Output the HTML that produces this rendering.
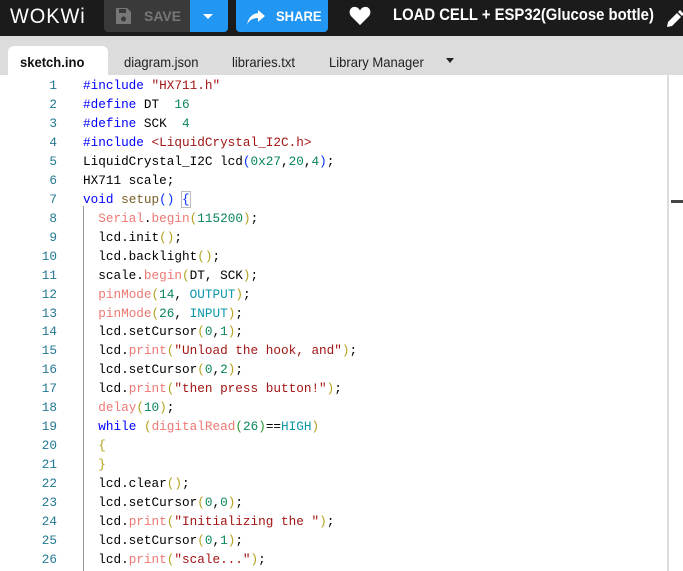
<!DOCTYPE html>
<html><head><meta charset="utf-8"><style>
*{margin:0;padding:0;box-sizing:border-box}
body{width:683px;height:571px;overflow:hidden;background:#fff;font-family:"Liberation Sans",sans-serif;position:relative}
.hdr{position:absolute;left:0;top:0;width:683px;height:36px;background:#1b1b1b;overflow:hidden}
.tabs{position:absolute;left:0;top:36px;width:683px;height:39px;background:#dcdcdc}
.tab{position:absolute;top:12px;height:29px;font-size:14px;line-height:29px;color:#222;transform:scaleX(0.93);transform-origin:left}
.ed{position:absolute;left:0;top:75px;width:669px;height:496px;background:#fff;border-right:2px solid #ddd}
.ln{position:absolute;left:0;width:57px;text-align:right;color:#237893;font-family:"Liberation Mono",monospace;font-size:12.7px}
.cd{position:absolute;left:83px;white-space:pre;font-family:"Liberation Mono",monospace;font-size:12.7px;color:#000}
.k{color:#0000ff}.s{color:#a31515}.n{color:#098658}.f{color:#795e26}.c{color:#ee7872}.t{color:#0a98a8}.b1{color:#0431fa}.b2{color:#b3a31e}.b3{color:#319331}
.guide{position:absolute;left:83px;top:206px;width:1px;height:365px;background:#999}
</style></head><body>
<div class="hdr">
<div style="position:absolute;left:10px;top:5px;color:#fff;font-family:'Liberation Sans',sans-serif;font-size:21px;letter-spacing:1px;transform:scaleX(0.95);transform-origin:left">WOKWi</div>
<div style="position:absolute;left:104px;top:0;width:87px;height:32px;background:#3a3a3a;border-radius:0 0 0 4px"></div>
<svg style="position:absolute;left:114px;top:7px" width="18" height="18" viewBox="0 0 18 18"><path d="M2 1h11l4 4v12H2z" fill="#777"/><rect x="5" y="2" width="7" height="4" fill="#3a3a3a"/><circle cx="9.5" cy="12" r="2.5" fill="#3a3a3a"/></svg>
<div style="position:absolute;left:144px;top:8px;color:#777;font-weight:bold;font-size:14px">SAVE</div>
<div style="position:absolute;left:190px;top:0;width:38px;height:32px;background:#2196f3;border-radius:0 0 4px 0"></div>
<div style="position:absolute;left:203px;top:14px;width:0;height:0;border-left:5px solid transparent;border-right:5px solid transparent;border-top:5px solid #fff"></div>
<div style="position:absolute;left:236px;top:0;width:92px;height:32px;background:#2196f3;border-radius:0 0 4px 4px"></div>
<svg style="position:absolute;left:246px;top:8px" width="20" height="18" viewBox="0 0 20 18"><path d="M12 2l7 6-7 6v-4C7 10 3 12 1 17c1-6 4-11 11-12z" fill="#fff"/></svg>
<div style="position:absolute;left:276px;top:8px;color:#fff;font-weight:bold;font-size:14px;transform:scaleX(0.93);transform-origin:left">SHARE</div>
<svg style="position:absolute;left:349px;top:6px" width="22" height="20" viewBox="0 0 24 22"><path d="M12 21L2 11C-1 7 1 1 6 1c3 0 5 2 6 4 1-2 3-4 6-4 5 0 7 6 4 10z" fill="#fff"/></svg>
<div style="position:absolute;left:393px;top:6px;color:#fff;font-weight:bold;font-size:16.5px;white-space:nowrap;transform:scaleX(0.9);transform-origin:left">LOAD CELL + ESP32(Glucose bottle)</div>
<svg style="position:absolute;left:664px;top:7px" width="20" height="22" viewBox="0 0 20 22"><path d="M3 20l1-5L13 6l4 4L8 19z M14 5l2-2 4 4-2 2z" fill="#fff"/></svg>
</div>
<div class="tabs">
<div style="position:absolute;left:8px;top:10px;width:100px;height:29px;background:#fff;border-radius:6px 6px 0 0"></div>
<div class="tab" style="left:20px;font-weight:bold;color:#111">sketch.ino</div>
<div class="tab" style="left:124px">diagram.json</div>
<div class="tab" style="left:232px">libraries.txt</div>
<div class="tab" style="left:329px">Library Manager</div>
<div style="position:absolute;left:446px;top:22px;border-left:4.5px solid transparent;border-right:4.5px solid transparent;border-top:5px solid #222"></div>
</div>
<div class="ed"></div>
<div style="position:absolute;left:671px;top:200px;width:12px;height:3px;background:#444"></div>
<div class="guide"></div>
<div id="code"></div>
<script>
var L=[
'<span class="k">#include</span> <span class="s">"HX711.h"</span>',
'<span class="k">#define</span> DT  <span class="n">16</span>',
'<span class="k">#define</span> SCK  <span class="n">4</span>',
'<span class="k">#include</span> <span class="s">&lt;LiquidCrystal_I2C.h&gt;</span>',
'LiquidCrystal_I2C lcd<span class="b1">(</span><span class="n">0x27</span>,<span class="n">20</span>,<span class="n">4</span><span class="b1">)</span>;',
'HX711 scale;',
'<span class="k">void</span> <span class="f">setup</span><span class="b1">()</span> <span class="b1" style="outline:1px solid #bbb">{</span>',
'  <span class="c">Serial</span>.<span class="c">begin</span><span class="b2">(</span><span class="n">115200</span><span class="b2">)</span>;',
'  lcd.init<span class="b2">()</span>;',
'  lcd.backlight<span class="b2">()</span>;',
'  scale.<span class="c">begin</span><span class="b2">(</span>DT, SCK<span class="b2">)</span>;',
'  <span class="c">pinMode</span><span class="b2">(</span><span class="n">14</span>, <span class="t">OUTPUT</span><span class="b2">)</span>;',
'  <span class="c">pinMode</span><span class="b2">(</span><span class="n">26</span>, <span class="t">INPUT</span><span class="b2">)</span>;',
'  lcd.setCursor<span class="b2">(</span><span class="n">0</span>,<span class="n">1</span><span class="b2">)</span>;',
'  lcd.<span class="c">print</span><span class="b2">(</span><span class="s">"Unload the hook, and"</span><span class="b2">)</span>;',
'  lcd.setCursor<span class="b2">(</span><span class="n">0</span>,<span class="n">2</span><span class="b2">)</span>;',
'  lcd.<span class="c">print</span><span class="b2">(</span><span class="s">"then press button!"</span><span class="b2">)</span>;',
'  <span class="c">delay</span><span class="b2">(</span><span class="n">10</span><span class="b2">)</span>;',
'  <span class="k">while</span> <span class="b2">(</span><span class="c">digitalRead</span><span class="b3">(</span><span class="n">26</span><span class="b3">)</span>==<span class="t">HIGH</span><span class="b2">)</span>',
'  <span class="b2">{</span>',
'  <span class="b2">}</span>',
'  lcd.clear<span class="b2">()</span>;',
'  lcd.setCursor<span class="b2">(</span><span class="n">0</span>,<span class="n">0</span><span class="b2">)</span>;',
'  lcd.<span class="c">print</span><span class="b2">(</span><span class="s">"Initializing the "</span><span class="b2">)</span>;',
'  lcd.setCursor<span class="b2">(</span><span class="n">0</span>,<span class="n">1</span><span class="b2">)</span>;',
'  lcd.<span class="c">print</span><span class="b2">(</span><span class="s">"scale..."</span><span class="b2">)</span>;'];
var h='';for(var i=0;i<L.length;i++){var y=78+i*18.96;h+='<div class="ln" style="top:'+y+'px">'+(i+1)+'</div><div class="cd" style="top:'+y+'px">'+L[i]+'</div>';}
document.getElementById('code').innerHTML=h;
</script>
</body></html>
